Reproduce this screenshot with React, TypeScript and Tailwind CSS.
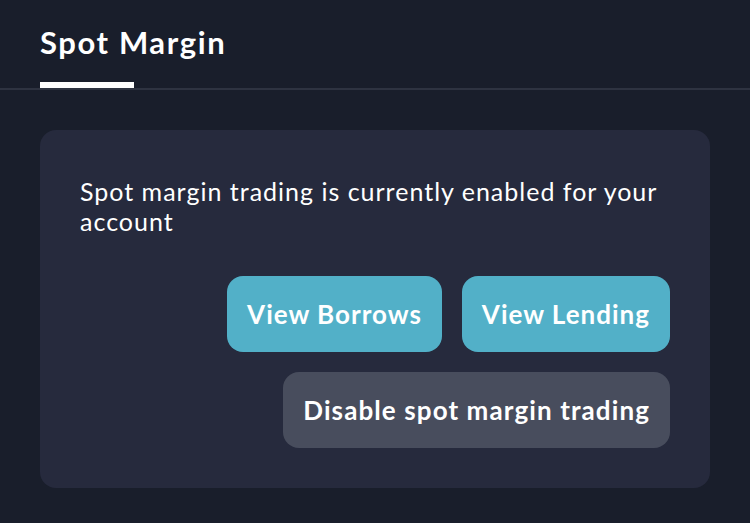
import React from 'react'

const App = () => {
   return (
      <div className="w-[750px] h-[523px] bg-[#191e2b] text-white font-['Lato','Liberation_Sans',sans-serif] overflow-hidden">
         <div className="border-b-2 border-[#2e3341] px-10">
            <div className="inline-flex flex-col pt-[24px]">
               <h1 className="text-[31px] font-bold leading-[36px] tracking-[1.6px]">Spot Margin</h1>
               <div className="mt-[22px] h-[6px] w-[94px] bg-white" />
            </div>
         </div>
         <div className="px-10 pt-10">
            <div className="bg-[#262a3d] rounded-2xl p-10">
               <p className="mt-[6px] text-[25px] leading-[30px] tracking-[1px]">
                  Spot margin trading is currently enabled for your account
               </p>
               <div className="flex flex-col items-end gap-5 mt-[40px]">
                  <div className="flex gap-5">
                     <button className="h-[76px] px-5 rounded-2xl bg-[#52b0c8] text-[26px] font-bold tracking-[1px]">View Borrows</button>
                     <button className="h-[76px] px-5 rounded-2xl bg-[#52b0c8] text-[26px] font-bold tracking-[1px]">View Lending</button>
                  </div>
                  <button className="h-[76px] px-5 rounded-2xl bg-[#484d5d] text-[26px] font-bold tracking-[1.1px]">Disable spot margin trading</button>
               </div>
            </div>
         </div>
      </div>
   )
}

export default App
